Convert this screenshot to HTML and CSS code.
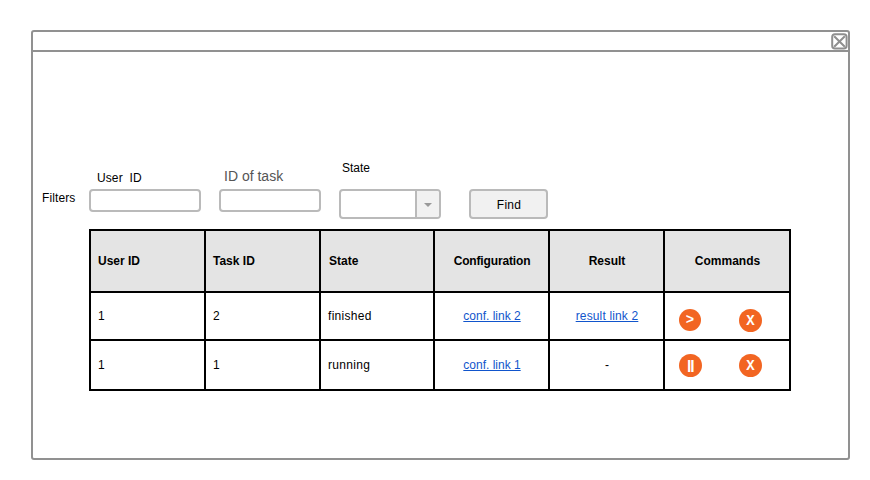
FILE: index.html
```html
<!DOCTYPE html>
<html lang="en">
<head>
<meta charset="utf-8">
<title>Tasks</title>
<link rel="stylesheet" href="styles.css">
</head>
<body>
<main class="window">
  <header class="titlebar">
    <svg class="close" width="17" height="17" viewBox="0 0 17 17" fill="none" stroke="#8f8f8f" stroke-width="2"><rect x="1.2" y="1.2" width="14.4" height="14.4" rx="2.8"/><path d="M3.2 3.2 13.8 13.8M13.8 3.2 3.2 13.8"/></svg>
  </header>
  <section class="filters">
    <span class="filters-title">Filters</span>
    <div class="field user"><span class="label">User&nbsp; ID</span><div class="box"></div></div>
    <div class="field task"><span class="label">ID of task</span><div class="box"></div></div>
    <div class="field state"><span class="label">State</span><div class="box"><span class="drop"><svg width="8" height="4" viewBox="0 0 8 4"><path d="M0 0h8L4 4z" fill="#999"/></svg></span></div></div>
    <div class="find">Find</div>
  </section>
  <section class="table">
    <div class="cell head">User ID</div>
    <div class="cell head">Task ID</div>
    <div class="cell head indent">State</div>
    <div class="cell head center tight">Configuration</div>
    <div class="cell head center">Result</div>
    <div class="cell head center">Commands</div>
    <div class="cell">1</div>
    <div class="cell">2</div>
    <div class="cell wide">finished</div>
    <div class="cell center"><span class="link">conf. link 2</span></div>
    <div class="cell center"><span class="link result">result link 2</span></div>
    <div class="cell commands"><span class="cmd small">&gt;</span><span class="cmd">X</span></div>
    <div class="cell">1</div>
    <div class="cell">1</div>
    <div class="cell wide">running</div>
    <div class="cell center"><span class="link">conf. link 1</span></div>
    <div class="cell center">-</div>
    <div class="cell commands last"><span class="cmd pause">||</span><span class="cmd">X</span></div>
  </section>
</main>
</body>
</html>
```
FILE: styles.css
```css
* { box-sizing: border-box; }
body {
  margin: 0;
  padding: 30px 0 0 31px;
  background: #fff;
  color: #000;
  font: 12px/14px "Liberation Sans", Arial, sans-serif;
}
.window {
  width: 819px;
  height: 430px;
  border: 2px solid #919191;
  border-radius: 3px;
}
.titlebar {
  display: flex;
  justify-content: flex-end;
  height: 20px;
  border-bottom: 2px solid #919191;
}
.close { display: block; flex: none; margin-top: 1px; }
.filters {
  display: flex;
  align-items: flex-start;
  height: 71px;
  margin-top: 106px;
  padding-left: 9px;
}
.filters-title { width: 47px; padding-top: 33px; letter-spacing: .1px; }
.field { display: flex; flex-direction: column; }
.box {
  height: 23px;
  border: 2px solid #bababa;
  border-radius: 4px;
}
.user { width: 112px; margin-right: 18px; padding-top: 13px; }
.user .label { height: 18px; padding-left: 8px; letter-spacing: .1px; }
.task { width: 102px; margin-right: 18px; padding-top: 10px; }
.task .label {
  height: 21px;
  padding-left: 5px;
  color: #555;
  font-size: 14px;
  line-height: 16px;
}
.state { width: 102px; margin-right: 28px; padding-top: 3px; }
.state .label { height: 28px; padding-left: 3px; }
.state .box {
  display: flex;
  justify-content: flex-end;
  height: 30px;
  overflow: hidden;
}
.drop {
  display: flex;
  align-items: center;
  justify-content: center;
  width: 24px;
  padding-top: 1px;
  border-left: 2px solid #bababa;
  background: #f1f1f1;
}
.find {
  width: 79px;
  height: 30px;
  margin-top: 31px;
  padding-left: 1px;
  border: 2px solid #bababa;
  border-radius: 4px;
  background: #f1f1f1;
  line-height: 28px;
  text-align: center;
  letter-spacing: .25px;
}
.table {
  display: grid;
  grid-template-columns: 113px 113px 112px 113px 113px 124px;
  grid-template-rows: 60px 46px 48px;
  gap: 2px;
  width: 702px;
  margin-left: 56px;
  border: 2px solid #000;
  background: #000;
}
.cell {
  display: flex;
  align-items: center;
  padding-left: 7px;
  background: #fff;
}
.head { background: #e4e4e4; font-weight: bold; }
.indent { padding-left: 8px; }
.center { justify-content: center; padding-left: 1px; }
.tight { letter-spacing: -.15px; }
.wide { letter-spacing: .3px; }
.link { color: #1155cc; text-decoration: underline; }
.result { letter-spacing: .15px; }
.commands { gap: 37px; padding: 8px 0 0 14px; }
.commands .small { margin-right: 1px; }
.last { padding-top: 0; }
.cmd {
  width: 23px;
  height: 23px;
  border-radius: 50%;
  background: #f26522;
  color: #fff;
  font: bold 14px/25px "Liberation Mono", monospace;
  text-align: center;
}
.commands .small { width: 22px; height: 22px; line-height: 22px; }
.commands .pause {
  font: bold 12px/22px "Liberation Sans", Arial, sans-serif;
  text-shadow: .6px 0 #fff;
}
```
